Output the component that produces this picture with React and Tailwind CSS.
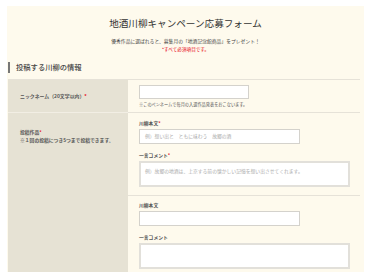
import React from 'react';

const font = { fontFamily: '"Noto Sans CJK JP", "Noto Sans", sans-serif' };

const Req = () => <span className="text-[#e60012]">*</span>;

const Field = ({ label, required, placeholder, first }) => (
    <div className={first ? '' : 'pt-[6px]'}>
        <div className="text-[4.8px] leading-[6px] font-bold text-[#555]">
            {label}{required && <Req />}
        </div>
        <div className="mt-[3px] w-[161px] h-[15px] bg-white border border-[#d4d2cc] flex items-center px-[5px] text-[4.8px] text-[#aaa]">
            {placeholder}
        </div>
    </div>
);

const Comment = ({ label, required, placeholder }) => (
    <div className="mt-[8px]">
        <div className="text-[4.8px] leading-[6px] font-bold text-[#555]">
            {label}{required && <Req />}
        </div>
        <div className="mt-[3px] w-[211px] h-[26px] bg-white border-2 border-[#e2e0da] px-[4px] pt-[5px] text-[4.8px] leading-[6px] text-[#aaa]">
            {placeholder}
        </div>
    </div>
);

export default function App() {
    return (
        <div className="w-[370px] h-[278px] bg-white overflow-hidden" style={font}>
            <div className="ml-[7px] mr-[6px] mt-[6px] h-[266px] bg-[#fefaed] flex flex-col">
                <h1 className="pt-[12px] text-center text-[9.6px] leading-[11.5px] text-[#333] font-normal">
                    地酒川柳キャンペーン応募フォーム
                </h1>
                <p className="mt-[7px] text-center text-[4.8px] leading-[7px] text-[#444]">
                    優秀作品に選ばれると、募集月の「地酒記念館商品」をプレゼント！
                </p>
                <p className="mt-[2px] text-center text-[4.6px] leading-[7px] text-[#e60012]">
                    *すべて必須項目です。
                </p>
                <div className="mt-[9px] ml-[1px] mr-[4px] pb-[6px] border-b border-[#e6e2d8]">
                    <h2 className="border-l-2 border-[#777] pl-[6px] text-[7.3px] leading-[11px] text-[#444] font-medium">
                        投稿する川柳の情報
                    </h2>
                </div>
                <div className="ml-[1px] mr-[4px] flex-1 grid grid-cols-[120px_1fr] grid-rows-[33px_1fr]">
                    <div className="bg-[#e6e2d4] border-b border-[#f2eee4] flex items-center pl-[12px] text-[4.9px] font-bold text-[#555]">
                        ニックネーム（20文字以内）<Req />
                    </div>
                    <div className="border-b border-[#e6e2d8] pl-[11px] pt-[5px]">
                        <div className="w-[110px] h-[14px] bg-white border border-[#d4d2cc]" />
                        <div className="mt-[2px] text-[4.2px] leading-[6px] text-[#555]">
                            ※このペンネームで毎月の入選作品発表をおこないます。
                        </div>
                    </div>
                    <div className="bg-[#e6e2d4] pl-[12px] pt-[15px] text-[4.8px] leading-[8px] font-bold text-[#555]">
                        <div>投稿作品<Req /></div>
                        <div>※１回の投稿につき5つまで投稿できます。</div>
                    </div>
                    <div className="flex flex-col">
                        <div className="border-b border-[#e6e2d8] pl-[11px] pt-[7px] pb-[8px]">
                            <Field label="川柳本文" required placeholder="例）想い出と　ともに味わう　故郷の酒" first />
                            <Comment label="一言コメント" required placeholder="例）故郷の地酒は、上京する前の懐かしい記憶を想い出させてくれます。" />
                        </div>
                        <div className="pl-[11px]">
                            <Field label="川柳本文" />
                            <Comment label="一言コメント" />
                        </div>
                    </div>
                </div>
            </div>
        </div>
    );
}
